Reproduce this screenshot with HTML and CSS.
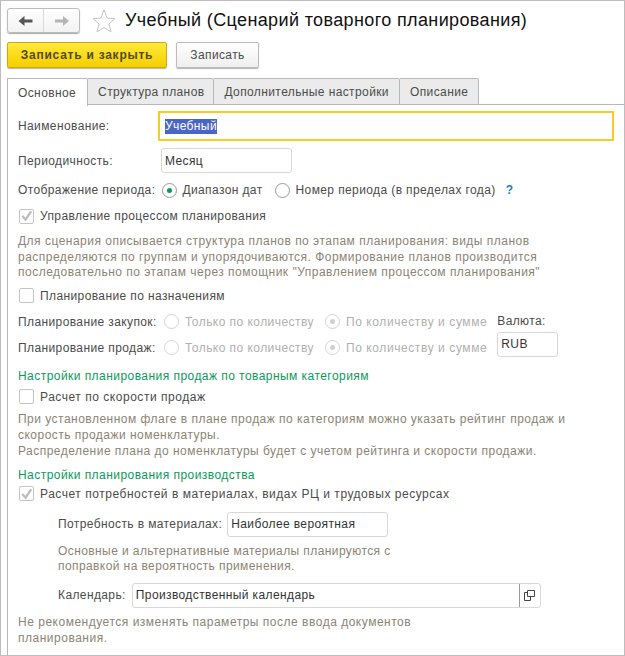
FILE: index.html
```html
<!DOCTYPE html>
<html lang="ru">
<head>
    <meta charset="UTF-8">
    <meta name="viewport" content="width=device-width, initial-scale=1.0">
    <title>Учебный (Сценарий товарного планирования)</title>
    <link rel="stylesheet" href="styles.css">
</head>
<body>
    <div class="window">
        <div class="head">
            <div class="nav">
                <span class="nav-btn">
                    <svg width="16" height="12" viewBox="0 0 16 12"><path d="M0.500 6 L6.500 1 V4.500 H14.500 V7.500 H6.500 V11 Z" fill="#555"/></svg>
                </span>
                <span class="nav-btn">
                    <svg width="16" height="12" viewBox="0 0 16 12"><path d="M15 6 L9 1 V4.500 H1 V7.500 H9 V11 Z" fill="#b4b4b4"/></svg>
                </span>
            </div>
            <svg class="star" width="24" height="24" viewBox="0 0 24 24"><path d="M12 1 L15 9 L23 9.500 L17 15 L19 23 L12 18.500 L5 23 L7 15 L1 9.500 L9 9 Z" fill="#fff" stroke="#c4c4c4"/></svg>
            <h1>Учебный (Сценарий товарного планирования)</h1>
        </div>

        <div class="actions">
            <button class="btn btn-main">Записать и закрыть</button>
            <button class="btn btn-save">Записать</button>
        </div>

        <div class="tabs">
            <span class="tab active">Основное</span>
            <span class="tab tab-plans">Структура планов</span>
            <span class="tab">Дополнительные настройки</span>
            <span class="tab">Описание</span>
        </div>

        <div class="panel">
            <div class="row row-name">
                <span class="label w-name">Наименование:</span>
                <div class="field-focus"><span class="selected">Учебный</span></div>
            </div>
            <div class="row row-period">
                <span class="label w-period">Периодичность:</span>
                <div class="field w-month">Месяц</div>
            </div>
            <div class="row row-display">
                <span class="label">Отображение периода:</span>
                <span class="radio on"></span><span class="opt">Диапазон дат</span>
                <span class="radio"></span><span class="opt opt-num">Номер периода (в пределах года)</span>
                <span class="help">?</span>
            </div>
            <div class="row row-check1">
                <span class="check checked"><svg width="14" height="14" viewBox="0 0 14 14"><path d="M2.500 7 L6 11 L12 2" fill="none" stroke="#bdbdbd" stroke-width="2.500"/></svg></span>
                <span class="label">Управление процессом планирования</span>
            </div>
            <p class="note note-1">Для сценария описывается структура планов по этапам планирования: виды планов<br>распределяются по группам и упорядочиваются. Формирование планов производится<br>последовательно по этапам через помощник "Управлением процессом планирования"</p>
            <div class="row row-check2">
                <span class="check"></span>
                <span class="label">Планирование по назначениям</span>
            </div>

            <div class="plan">
                <div class="plan-rows">
                    <div class="row plan-row">
                        <span class="label w-plan">Планирование закупок:</span>
                        <span class="radio off"></span><span class="opt off-text w-opt">Только по количеству</span>
                        <span class="radio off dot"></span><span class="opt off-text off-sum">По количеству и сумме</span>
                    </div>
                    <div class="row plan-row">
                        <span class="label w-plan">Планирование продаж:</span>
                        <span class="radio off"></span><span class="opt off-text w-opt">Только по количеству</span>
                        <span class="radio off dot"></span><span class="opt off-text off-sum">По количеству и сумме</span>
                    </div>
                </div>
                <div class="currency">
                    <span class="label">Валюта:</span>
                    <div class="field w-rub">RUB</div>
                </div>
            </div>

            <div class="group group-sales">Настройки планирования продаж по товарным категориям</div>
            <div class="row row-check3">
                <span class="check"></span>
                <span class="label label-wide">Расчет по скорости продаж</span>
            </div>
            <p class="note note-2">При установленном флаге в плане продаж по категориям можно указать рейтинг продаж и<br>скорость продажи номенклатуры.<br>Распределение плана до номенклатуры будет с учетом рейтинга и скорости продажи.</p>

            <div class="group group-prod">Настройки планирования производства</div>
            <div class="row row-check4">
                <span class="check checked"><svg width="14" height="14" viewBox="0 0 14 14"><path d="M2.500 7 L6 11 L12 2" fill="none" stroke="#bdbdbd" stroke-width="2.500"/></svg></span>
                <span class="label label-wide">Расчет потребностей в материалах, видах РЦ и трудовых ресурсах</span>
            </div>
            <div class="inner">
                <div class="row row-need">
                    <span class="label">Потребность в материалах:</span>
                    <div class="field w-need">Наиболее вероятная</div>
                </div>
                <p class="note note-3">Основные и альтернативные материалы планируются с<br>поправкой на вероятность применения.</p>
                <div class="row row-cal">
                    <span class="label">Календарь:</span>
                    <div class="field w-cal">
                        <span class="cal-text">Производственный календарь</span>
                        <span class="cal-btn">
                            <svg width="13" height="13" viewBox="0 0 13 13"><path d="M4.500 1.500 H11.500 V7.500 H4.500 Z M4.500 3.500 H1.500 V11.500 H7.500 V7.500" fill="none" stroke="#444"/></svg>
                        </span>
                    </div>
                </div>
            </div>
            <p class="note note-4">Не рекомендуется изменять параметры после ввода документов<br>планирования.</p>
        </div>
    </div>
</body>
</html>
```

FILE: styles.css
```css
* {
    box-sizing: border-box;
}
html, body {
    margin: 0;
    padding: 0;
}
body {
    font-family: "Liberation Sans", Arial, sans-serif;
    font-size: 12px;
    letter-spacing: 0.39px;
    color: #4b4b4b;
    background: #fff;
}
.window {
    width: 625px;
    height: 656px;
    padding: 0 0 0 6px;
    border: 1px solid #bdbdbd;
    overflow: hidden;
}

/* head */
.head {
    display: flex;
    align-items: center;
    height: 25px;
    margin-top: 7px;
}
.nav {
    display: flex;
    width: 73px;
    height: 25px;
    border: 1px solid #bcbcbc;
    border-radius: 3px;
    box-shadow: 0 1px 1px #a8a8a8;
    background: linear-gradient(#fff, #f2f2f2);
}
.nav-btn {
    flex: 1;
    display: flex;
    align-items: center;
    justify-content: center;
}
.nav-btn + .nav-btn {
    border-left: 1px solid #d8d8d8;
}
.star {
    margin-left: 12px;
}
h1 {
    margin: 0 0 0 9px;
    font-size: 18px;
    font-weight: normal;
    letter-spacing: 0.37px;
    color: #111;
}

.actions {
    display: flex;
    gap: 9px;
    margin-top: 9px;
}
.btn {
    height: 26px;
    padding: 0;
    font-family: inherit;
    font-size: 12px;
    letter-spacing: 0.39px;
    color: #4b4b4b;
    border: 1px solid #bcbcbc;
    border-radius: 2px;
    background: linear-gradient(#fff, #efefef);
    box-shadow: 0 1px 1px #b4b4b4;
}
.btn-main {
    width: 160px;
    font-weight: bold;
    letter-spacing: 0.75px;
    color: #544c10;
    border-color: #c9ab17;
    background: linear-gradient(#ffe93a, #f4cf00);
}
.btn-save {
    width: 83px;
}

/* tabs */
.tabs {
    display: flex;
    height: 27px;
    margin-top: 10px;
}
.tab {
    display: flex;
    align-items: center;
    padding: 0 10px;
    border: 1px solid #b8b8b8;
    border-left: 0;
    border-radius: 0 2px 0 0;
    background: #ebebeb;
}
.tab:first-child {
    border-left: 1px solid #b8b8b8;
}
.tab-plans {
    padding-right: 9px;
}
.tab.active {
    padding-right: 11px;
    background: #fff;
    border-bottom: 0;
    position: relative;
    z-index: 1;
    height: 28px;
}
.panel {
    height: 551px;
    margin-top: -1px;
    padding-left: 10px;
    border-top: 1px solid #b8b8b8;
    border-left: 1px solid #b8b8b8;
}

.row {
    display: flex;
    align-items: center;
}
.label {
    white-space: nowrap;
}
.label-wide {
    letter-spacing: 0.53px;
}
.w-name {
    width: 140px;
}
.w-period {
    width: 143px;
}
.row-name {
    height: 30px;
    margin-top: 6px;
}
.field-focus {
    width: 456px;
    height: 30px;
    padding: 0 5px;
    display: flex;
    align-items: center;
    border: 2px solid #f8cb25;
}
.selected {
    background: #4a66c4;
    color: #fff;
    line-height: 15px;
}
.field {
    height: 25px;
    padding: 0 3px;
    display: flex;
    align-items: center;
    color: #333;
    background: #fff;
    border: 1px solid #d8d8d8;
    border-radius: 3px;
}
.row-period {
    height: 25px;
    margin-top: 7px;
}
.w-month {
    width: 131px;
}
.row-display {
    height: 18px;
    margin-top: 8px;
}
.radio {
    flex: none;
    position: relative;
    width: 15px;
    height: 15px;
    margin: 0 5px 0 7px;
    border: 1px solid #9a9a9a;
    border-radius: 50%;
    background: #fff;
}
.radio.on::after, .radio.dot::after {
    content: "";
    position: absolute;
    left: 4px;
    top: 4px;
    width: 5px;
    height: 5px;
    border-radius: 50%;
    background: #0a9a5c;
}
.radio.off {
    margin-right: 6px;
    border-color: #d4d4d4;
}
.radio.dot::after {
    background: #d0d0d0;
}
.opt {
    margin-right: 5px;
    white-space: nowrap;
}
.opt-num {
    margin-left: 1px;
}
.off-text {
    margin-right: 4px;
    letter-spacing: 0.45px;
    color: #b0b0b0;
}
.off-sum {
    letter-spacing: 0.58px;
}
.w-opt {
    margin-right: 4px;
}
.help {
    margin-left: 5px;
    color: #1a7fb8;
    font-weight: bold;
}

.check {
    flex: none;
    display: flex;
    align-items: center;
    justify-content: center;
    width: 15px;
    height: 15px;
    margin: 0 6px 0 1px;
    border: 1px solid #c4c4c4;
    border-radius: 2px;
    background: #fff;
}
.row-check1 {
    height: 18px;
    margin-top: 8px;
}
.note {
    margin: 0;
    color: #8b8474;
    line-height: 15.500px;
}
.note-1 {
    margin-top: 9px;
    letter-spacing: 0.49px;
}
.row-check2 {
    height: 18px;
    margin-top: 6px;
}

.plan {
    display: flex;
    margin-top: 4px;
}
.plan-row {
    height: 26px;
}
.w-plan {
    width: 139px;
}
.currency {
    margin-left: 6px;
    margin-top: 5px;
}
.currency .field {
    margin-top: 4px;
}
.w-rub {
    width: 61px;
}

.group {
    color: #0b9a5c;
    line-height: 16px;
    letter-spacing: 0.45px;
}
.group-sales {
    margin-top: 7px;
}
.row-check3 {
    height: 18px;
    margin-top: 4px;
}
.note-2 {
    margin-top: 5px;
    line-height: 16px;
    letter-spacing: 0.48px;
}
.group-prod {
    margin-top: 8px;
}
.row-check4 {
    height: 18px;
    margin-top: 2px;
}
.inner {
    padding-left: 40px;
}
.row-need {
    height: 25px;
    margin-top: 9px;
}
.w-need {
    width: 161px;
    margin-left: 5px;
}
.note-3 {
    margin-top: 7px;
    letter-spacing: 0.41px;
}
.row-cal {
    height: 25px;
    margin-top: 8px;
}
.w-cal {
    width: 409px;
    margin-left: 6px;
    padding-right: 0;
    justify-content: space-between;
}
.cal-btn {
    display: flex;
    align-items: center;
    justify-content: center;
    width: 21px;
    height: 23px;
    border-left: 1px solid #9a9a9a;
}
.note-4 {
    margin-top: 6px;
    line-height: 16px;
    letter-spacing: 0.51px;
}
```
